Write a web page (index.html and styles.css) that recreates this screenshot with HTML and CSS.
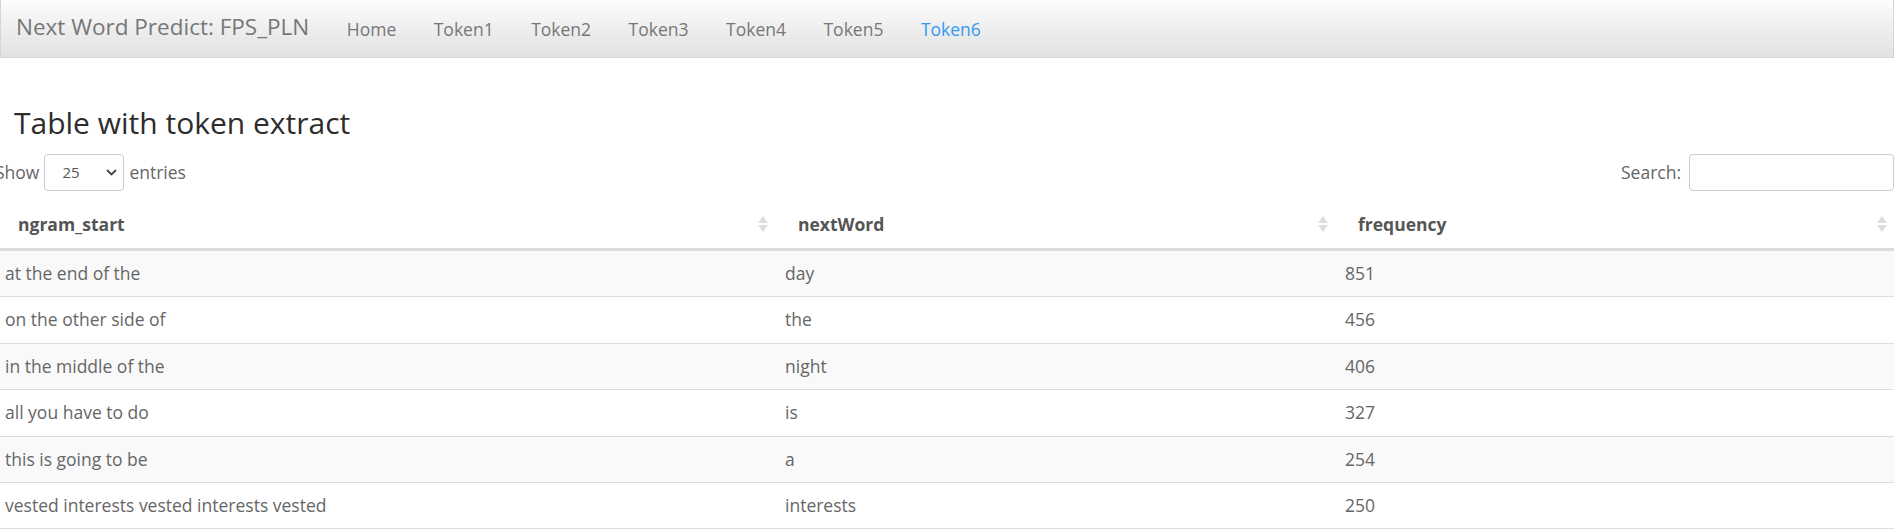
FILE: index.html
```html
<!DOCTYPE html>
<html lang="en">
<head>
<meta charset="utf-8">
<title>Next Word Predict: FPS_PLN</title>
<link rel="stylesheet" href="styles.css">
</head>
<body>
<nav class="navbar">
  <span class="brand">Next Word Predict: FPS_PLN</span>
  <ul class="nav">
    <li><a href="#">Home</a></li>
    <li><a href="#">Token1</a></li>
    <li><a href="#">Token2</a></li>
    <li><a href="#">Token3</a></li>
    <li><a href="#">Token4</a></li>
    <li><a href="#">Token5</a></li>
    <li class="active"><a href="#">Token6</a></li>
  </ul>
</nav>
<main class="content">
  <h2 class="title">Table with token extract</h2>
  <div class="dt-wrapper">
    <div class="dt-controls">
      <label class="dt-length">Show
        <span class="select">
          <span class="select-value">25</span>
          <svg class="chev" width="11" height="7" viewBox="0 0 11 7"><path d="M1 1 L5.5 5.5 L10 1" fill="none" stroke="#444" stroke-width="1.8"/></svg>
        </span>
        entries</label>
      <label class="dt-search">Search: <span class="search-input"></span></label>
    </div>
    <table class="dt">
      <colgroup>
        <col class="c1"><col class="c2"><col>
      </colgroup>
      <thead>
        <tr>
          <th>ngram_start<span class="sort"><i class="up"></i><i class="down"></i></span></th>
          <th>nextWord<span class="sort"><i class="up"></i><i class="down"></i></span></th>
          <th>frequency<span class="sort"><i class="up"></i><i class="down"></i></span></th>
        </tr>
      </thead>
      <tbody>
        <tr class="odd"><td>at the end of the</td><td>day</td><td>851</td></tr>
        <tr><td>on the other side of</td><td>the</td><td>456</td></tr>
        <tr class="odd"><td>in the middle of the</td><td>night</td><td>406</td></tr>
        <tr><td>all you have to do</td><td>is</td><td>327</td></tr>
        <tr class="odd"><td>this is going to be</td><td>a</td><td>254</td></tr>
        <tr><td>vested interests vested interests vested</td><td>interests</td><td>250</td></tr>
      </tbody>
    </table>
  </div>
</main>
</body>
</html>
```
FILE: styles.css
```css
html, body {
  margin: 0;
  padding: 0;
  background: #fff;
  overflow: hidden;
}
body {
  font-family: "Open Sans", "Liberation Sans", sans-serif;
  font-size: 17.5px;
  line-height: 25px;
  color: #666;
}
.navbar {
  box-sizing: border-box;
  height: 58px;
  display: flex;
  align-items: center;
  border: 1px solid #d5d5d5;
  border-top: none;
  background-image: linear-gradient(#fdfdfd, #eeeeee 50%, #e2e2e2);
  padding-left: 15px;
}
.brand {
  font-size: 22.5px;
  color: #777;
  padding-right: 18.75px;
  margin-top: -4px;
}
.nav {
  list-style: none;
  margin: 0;
  padding: 0;
  display: flex;
}
.nav a {
  display: block;
  padding: 0 18.75px;
  color: #777;
  text-decoration: none;
  font-size: 17.5px;
  margin-top: 2px;
}
.nav .active a {
  color: #3399f3;
}
.content {
  padding: 0;
}
.title {
  margin: 43px 0 0 14px;
  font-size: 30px;
  font-weight: 400;
  line-height: 44px;
  color: #2d2d2d;
}
.dt-wrapper {
  margin-left: -5px;
}
.dt-controls {
  display: flex;
  justify-content: space-between;
  align-items: center;
  margin-top: 9px;
  height: 37px;
}
.dt-length, .dt-search {
  display: flex;
  align-items: center;
  gap: 5px;
  font-weight: 400;
}
.select {
  box-sizing: border-box;
  width: 80px;
  height: 37px;
  border: 1px solid #ccc;
  border-radius: 4px;
  display: flex;
  align-items: center;
  justify-content: space-between;
  padding: 0 6px 0 17px;
  font-size: 15px;
  color: #555;
}
.chev {
  display: block;
}
.search-input {
  display: block;
  box-sizing: border-box;
  width: 205px;
  height: 37px;
  border: 1px solid #ccc;
  border-radius: 4px;
  margin-left: 3px;
}
.dt {
  width: 100%;
  border-collapse: collapse;
  table-layout: fixed;
  margin-top: 6px;
}
.c1 { width: 780px; }
.c2 { width: 560px; }
.dt th {
  position: relative;
  text-align: left;
  font-weight: 700;
  color: #555;
  padding: 15px 30px 11px 23px;
  border-bottom: 3px solid #ddd;
}
.dt td {
  padding: 10px 10px;
  line-height: 25.4px;
  border-top: 1px solid #ddd;
}
.dt tr:last-child td {
  border-bottom: 1px solid #ddd;
}
.dt tr.odd td {
  background: #f9f9f9;
}
.sort {
  position: absolute;
  right: 7px;
  top: 50%;
  margin-top: -7px;
  display: flex;
  flex-direction: column;
  gap: 2px;
}
.sort i {
  display: block;
  width: 0;
  height: 0;
  border-left: 5.5px solid transparent;
  border-right: 5.5px solid transparent;
}
.sort .up { border-bottom: 7px solid #dcdcdc; }
.sort .down { border-top: 7px solid #dcdcdc; }
```
